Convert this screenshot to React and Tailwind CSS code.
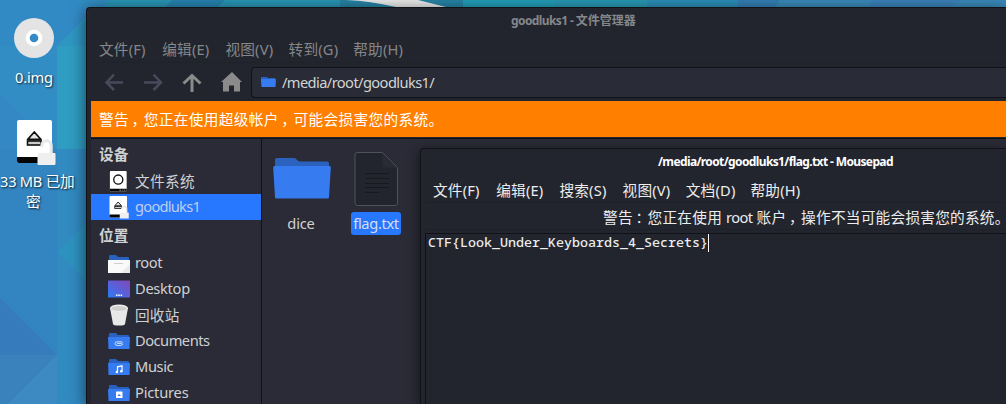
import React from "react";

function Wallpaper() {
  return (
    <svg className="absolute inset-0" width="1006" height="404" viewBox="0 0 1006 404">
      <rect width="1006" height="404" fill="#338ac4" />
      <path d="M0 0H86V20L57 46H0z" fill="#328ac5" />
      <path d="M57 46L104 0V149H57z" fill="#2e9dc0" />
      <path d="M57 46H90V149H57z" fill="#2f9cc2" />
      <path d="M57 46L90 16V46z" fill="#2f96c2" />
      <path d="M0 46H57V149H0z" fill="#338dc5" />
      <path d="M0 93L57 149H0z" fill="#3489c5" />
      <path d="M0 149H57V355H0z" fill="#3385c1" />
      <path d="M57 149H90V404H57z" fill="#318ac0" />
      <path d="M57 252L90 219V285z" fill="#2e92bf" />
      <path d="M0 298L57 355H0z" fill="#367cbd" />
      <path d="M0 355H57V404H0z" fill="#3a82bb" />
      <path d="M57 355V404H8z" fill="#3c8ac1" />
      <path d="M80 0H350V8H80z" fill="#2996b4" />
      <path d="M80 0H110L102 8H80z" fill="#318cc0" />
      <path d="M172 0H225L217 8H164z" fill="#2783b0" />
      <path d="M340 0H470V8H340z" fill="#2684a5" />
      <path d="M463 0H650V8H463z" fill="#249fb8" />
      <path d="M555 0H650V8H555z" fill="#289ab5" />
      <path d="M647 0H740V8H647z" fill="#2b8fb8" />
      <path d="M738 0H860V8H738z" fill="#347fb5" />
      <path d="M780 0H1006V8H774z" fill="#3a8abb" />
      <path d="M873 0H960L950 8H867z" fill="#3b83bb" />
      <path d="M346 0H418L446 7H396Q370 1 346 0z" fill="#ececec" />
    </svg>
  );
}

function DriveIcon({ w, h, locked, round }) {
  return (
    <svg width={w} height={h} viewBox="0 0 40 48" className="shrink-0">
      <rect x="1" y="2" width="35" height="43" rx="2" fill="#fff" />
      <path d="M1 39H36V43Q36 45 34 45H3Q1 45 1 43z" fill="#050505" />
      {round ? (
        <>
          <circle cx="18.5" cy="20" r="9.5" fill="none" stroke="#111" strokeWidth="2.8" />
          <path d="M21 41h3v2h-3zM27 41h2v2h-2zM31 41h2v2h-2z" fill="#ddd" />
        </>
      ) : (
        <>
          <path d="M18.300 14L25 21.500H11.600z" fill="#e4e4e4" stroke="#111" strokeWidth="1.800" strokeLinejoin="round" />
          <rect x="11.500" y="23" width="13.600" height="4" fill="#ccc" stroke="#111" strokeWidth="1.600" />
        </>
      )}
      {locked && (
        <>
          <path d="M25.800 29V27.500a4.700 4.700 0 0 1 9.400 0V36" fill="none" stroke="#e9e9e9" strokeWidth="3" />
          <rect x="21.500" y="35" width="18" height="12" rx="1" fill="#efefef" />
        </>
      )}
    </svg>
  );
}

function Folder({ kind }) {
  const home = kind === "home";
  return (
    <svg width="22" height="20" viewBox="0 0 22 20" className="shrink-0">
      <path d="M1 3Q1 2 2 2H8L10 4H20Q21 4 21 5V10H1z" fill="#2861bf" />
      <path d={home ? "M0 7H22V20H0z" : "M0 6H22L21.500 18H.5z"} fill={home ? "#fafafa" : "#367bf0"} />
      {home && <path d="M22 11V20H13z" fill="#eaeaea" />}
      {home && <path d="M6 10.500h9" stroke="#cfcfcf" strokeWidth="1" />}
      {kind === "docs" && (
        <path d="M9 12.400h4.500a.8.800 0 0 0 0-1.600H9a2 1.800 0 0 0 0 3.600h3.500a2.300 2 0 0 0 2.300-1.600" fill="none" stroke="#dfe9fc" strokeWidth=".9" />
      )}
      {kind === "music" && (
        <>
          <path d="M9.500 15V9.800L14 8.800V14" fill="none" stroke="#fff" strokeWidth="1.200" />
          <circle cx="8.900" cy="15" r="1.300" fill="#fff" />
          <circle cx="13.300" cy="14.200" r="1.300" fill="#fff" />
        </>
      )}
      {kind === "pics" && (
        <>
          <rect x="8" y="8.500" width="6.500" height="6.500" rx=".5" fill="#fff" />
          <path d="M9.500 13L11 11L13 13z" fill="#367bf0" />
        </>
      )}
    </svg>
  );
}

function DesktopIcon() {
  return (
    <svg width="22" height="18" viewBox="0 0 22 18" className="shrink-0">
      <defs>
        <linearGradient id="desk" x1="0" y1="1" x2="1" y2="0">
          <stop offset="0" stopColor="#2a7cf5" />
          <stop offset=".5" stopColor="#5c5fd8" />
          <stop offset="1" stopColor="#8148b8" />
        </linearGradient>
      </defs>
      <rect y=".5" width="22" height="17" rx=".8" fill="url(#desk)" />
      <path d="M8 14.500h1.500v1.500H8zM10.300 14.500h1.500v1.500h-1.500zM12.600 14.500h1.500v1.500h-1.500z" fill="#fff" />
    </svg>
  );
}

function TrashIcon() {
  return (
    <svg width="22" height="22" viewBox="0 0 22 22" className="shrink-0">
      <path d="M2 4L5 20Q5.300 21.500 11 21.500T17 20L20 4z" fill="#e8e8e8" />
      <ellipse cx="11" cy="4" rx="9" ry="3.500" fill="#ededed" />
      <ellipse cx="11" cy="4.400" rx="7.800" ry="2.500" fill="#cfcfcf" />
    </svg>
  );
}

// Full-width punctuation centred in its cell.
const Punct = ({ children }) => (
  <span className="pl-[2.600px] pr-[4.600px] font-['Noto_Sans_CJK_SC'] [font-feature-settings:'halt']">{children}</span>
);

function Place({ icon, label, selected, tracking = "pb-[2px] tracking-[-0.4px]" }) {
  return (
    <div className={selected ? "flex h-[26px] items-center bg-[#2777ff] pl-[17px] text-[#bfcdf0]" : "flex h-[26px] items-center pl-[17px]"}>
      <span className="flex w-[22px] shrink-0 justify-center">{icon}</span>
      <span className={`ml-[5px] whitespace-nowrap ${tracking}`}>{label}</span>
    </div>
  );
}

function Menu({ items }) {
  return (
    <div className="flex whitespace-nowrap tracking-[0.2px]">
      {items.map((m) => (
        <span key={m} className="w-[63.200px] shrink-0 last:pl-[1.500px]">{m}</span>
      ))}
    </div>
  );
}

function Mousepad() {
  return (
    <div className="absolute left-[420px] top-[148px] flex h-[256px] w-[586px] flex-col overflow-hidden rounded-tl-[4px] border-l border-t border-[#101218] bg-[#23252e] pl-[4px] text-[#eceded] shadow-[-2px_2px_12px_rgba(0,0,0,0.45)]">
      <div className="h-[27px] shrink-0 whitespace-nowrap pl-[233px] text-[12px] font-bold leading-[26px] tracking-[-0.62px] text-white">
        /media/root/goodluks1/flag.txt - Mousepad
      </div>
      <div className="flex h-[27px] shrink-0 items-center border-b border-[#1f2129] pl-[8px] pt-[2px]">
        <Menu items={["文件(F)", "编辑(E)", "搜索(S)", "视图(V)", "文档(D)", "帮助(H)"]} />
      </div>
      <div className="h-[27px] shrink-0 whitespace-nowrap border-b border-[#1f2129] pl-[178px] leading-[28px] tracking-[0.24px]">
        警告<Punct>：</Punct>您正在使用 <span className="tracking-[-0.6px]">root</span> 账户<Punct>，</Punct>操作不当可能会损害您的系统。
      </div>
      <div className="mt-[3px] flex flex-1 items-start border-l border-t border-[#101218] pl-[2px]">
        <span className="whitespace-pre font-['Noto_Sans_Mono','DejaVu_Sans_Mono',monospace] text-[13.330px] font-medium leading-[17px]">
          CTF{"{"}Look_Under_Keyboards_4_Secrets{"}"}
        </span>
        <span className="h-[18px] w-px bg-white" />
      </div>
    </div>
  );
}

function FileManager() {
  return (
    <div className="absolute left-[86px] top-[7px] flex h-[397px] w-[920px] flex-col overflow-hidden rounded-tl-[4px] border-l border-t border-[#101218] bg-[#23252e] pl-[4px] shadow-[0_3px_16px_rgba(0,0,0,0.6)]">
      <div className="h-[29px] shrink-0 whitespace-nowrap pl-[420px] text-[12px] font-bold leading-[26px] text-[#85878b]">
        <span className="tracking-[-0.6px]">goodluks1 - </span>文件管理器
      </div>
      <div className="flex h-[26px] shrink-0 items-center border-b border-[#20222a] pb-[2px] pl-[8px] text-[#858789]">
        <Menu items={["文件(F)", "编辑(E)", "视图(V)", "转到(G)", "帮助(H)"]} />
      </div>
      <div className="flex h-[38px] shrink-0 items-center">
        <svg width="160" height="38" viewBox="0 0 160 38" fill="none" className="shrink-0">
          <path d="M32 19.500H16M23 11.500L15.500 19.500L23 27" stroke="#484a5c" strokeWidth="2.500" />
          <path d="M53 19.500H70M62.500 11.500L70 19.500L62.500 27" stroke="#484a5c" strokeWidth="2.500" />
          <path d="M101 29V13M92.500 20.500L101 12.500L109.500 20.500" stroke="#8b8b8c" strokeWidth="3" />
          <path d="M141 9L151 19H149V28.500H143V22.500H138V28.500H132V19H130z" fill="#8b8b8c" />
        </svg>
        <div className="flex h-[31px] flex-1 items-center rounded-l-[4px] border-y border-l border-[#101218] bg-[#292b36] pl-[9px] text-[#d3d4d4]">
          <svg width="15" height="12" viewBox="0 0 15 12">
            <path d="M0 1H6L7 2H14V6H0z" fill="#2861bf" />
            <path d="M0 3H15L14.500 11H.5z" fill="#367bf0" />
          </svg>
          <span className="ml-[6px] pb-px tracking-[-0.6px]">/media/root/goodluks1/</span>
        </div>
      </div>
      <div className="h-[36px] shrink-0 whitespace-nowrap bg-[#ff7f00] pl-[8px] leading-[36px] tracking-[0.33px] text-white">
        警告<Punct>，</Punct>您正在使用超级帐户<Punct>，</Punct>可能会损害您的系统。
      </div>
      <div className="mt-px flex min-h-0 flex-1 border-t border-[#101218] bg-[#2a2b36] text-[#d0d1d3]">
        <div className="w-[171px] shrink-0 overflow-hidden border-r border-[#101218] pt-[3px]">
          <div className="h-[26px] pl-[8px] font-bold leading-[24px]">设备</div>
          <Place icon={<DriveIcon w={20} h={23} round />} label="文件系统" tracking="tracking-[0.33px]" />
          <Place icon={<DriveIcon w={20} h={24} locked />} label="goodluks1" selected tracking="pb-[2px] tracking-[-0.75px]" />
          <div className="h-[30px] pl-[8px] font-bold leading-[30px]">位置</div>
          <Place icon={<Folder kind="home" />} label="root" />
          <Place icon={<DesktopIcon />} label="Desktop" tracking="pb-[2px] tracking-[-0.3px]" />
          <Place icon={<TrashIcon />} label="回收站" tracking="tracking-[0.2px]" />
          <Place icon={<Folder kind="docs" />} label="Documents" tracking="pb-[2px] tracking-[-0.5px]" />
          <Place icon={<Folder kind="music" />} label="Music" />
          <Place icon={<Folder kind="pics" />} label="Pictures" tracking="pb-[2px] tracking-[-0.2px]" />
        </div>
        <div className="flex items-start pl-[11px] pt-[12px]">
          <div className="flex w-[58px] flex-col items-center">
            <svg width="58" height="56" viewBox="0 0 58 56">
              <path d="M2 18V9Q2 7 4 7H21Q23 7 24 9Q25.500 10.500 28 10.500H54Q56 10.500 56 12.500V18z" fill="#2b62bd" />
              <path d="M1.500 15H56.500Q58 15 57.800 17L56 46Q56 47.500 54.500 47.500H3.500Q2 47.500 2 46L.2 17Q0 15 1.500 15z" fill="#367bf0" />
            </svg>
            <span className="mt-[5px] pr-[2px] leading-[23px] tracking-[-0.2px]">dice</span>
          </div>
          <div className="ml-[20px] flex w-[50px] flex-col items-center">
            <svg width="44" height="56" viewBox="0 0 44 56">
              <path d="M3 1.500H28.500L43.500 16.500V52Q43.500 54.500 41 54.500H3.500Q1 54.500 1 52V4Q1 1.500 3 1.500z" fill="#23252e" stroke="#50525a" />
              <path d="M28.500 2V14.500Q28.500 16.500 30.500 16.500H43z" fill="#292b35" />
              <path d="M11 22.500H35M11 27.500H35M11 32.500H35M11 36.500H35M11 41.500H25" stroke="#171920" />
            </svg>
            <span className="mt-[5px] h-[23px] w-[50px] rounded-[3px] bg-[#2777ff] text-center leading-[23px] tracking-[-0.35px] text-[#d6def2]">flag.txt</span>
          </div>
        </div>
      </div>
    </div>
  );
}

export default function App() {
  return (
    <div className="relative h-[404px] w-[1006px] overflow-hidden font-['Noto_Sans','Noto_Sans_CJK_SC',sans-serif] text-[14.667px] leading-[20px]">
      <Wallpaper />
      <div className="relative flex w-[86px] flex-col text-white [text-shadow:1px_1px_2px_rgba(0,0,0,0.8)]">
        <div className="flex w-[68px] flex-col items-center pt-[17px]">
          <svg width="42" height="42" viewBox="0 0 42 42">
            <circle cx="21" cy="21" r="20" fill="#e4e4e4" />
            <circle cx="21" cy="21" r="6.300" fill="#338ac4" stroke="#fff" strokeWidth="4" />
          </svg>
          <span className="mt-[8px] tracking-[-0.2px]">0.img</span>
        </div>
        <div className="flex w-[76px] flex-col pt-[31px]">
          <div className="pl-[16px]">
            <DriveIcon w={40} h={48} locked />
          </div>
          <span className="mt-[5px] whitespace-nowrap text-left leading-[20px] tracking-[-0.25px]">33 MB 已加</span>
          <span className="pl-[26px] leading-[20px]">密</span>
        </div>
      </div>
      <FileManager />
      <Mousepad />
    </div>
  );
}
